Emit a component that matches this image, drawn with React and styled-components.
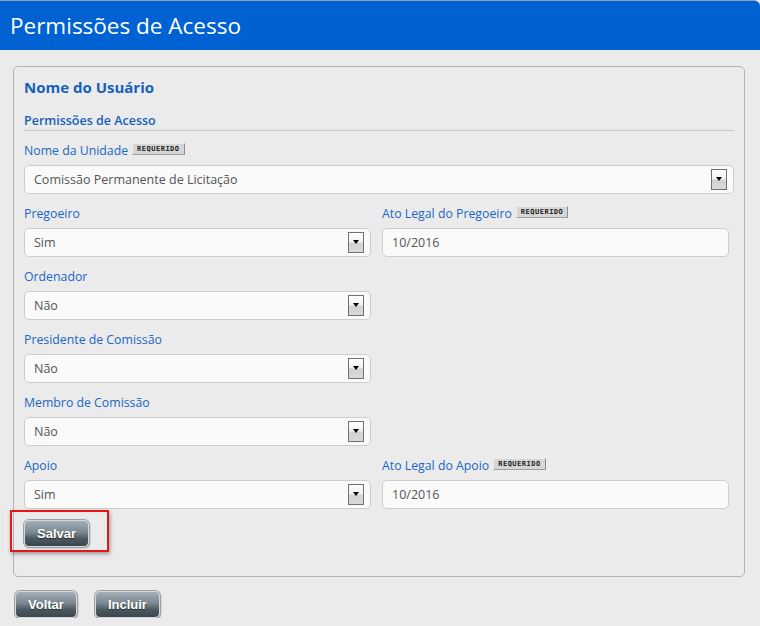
import * as React from 'react';
import styled, { createGlobalStyle } from 'styled-components';

const GlobalStyle = createGlobalStyle`
  body {
    margin: 0;
    background: #ebebeb;
    font-family: "Open Sans", "DejaVu Sans", sans-serif;
  }
`;

const fields = [
  { label: 'Pregoeiro', value: 'Sim', legal: { label: 'Ato Legal do Pregoeiro', value: '10/2016' } },
  { label: 'Ordenador', value: 'Não' },
  { label: 'Presidente de Comissão', value: 'Não' },
  { label: 'Membro de Comissão', value: 'Não' },
  { label: 'Apoio', value: 'Sim', legal: { label: 'Ato Legal do Apoio', value: '10/2016' } },
];

export default function App() {
  return (
    <>
      <GlobalStyle />
      <Header>Permissões de Acesso</Header>
      <Content>
        <Panel>
          <Title>Nome do Usuário</Title>
          <SubTitle>Permissões de Acesso</SubTitle>
          <Form>
            <Field wide>
              <Label>Nome da Unidade <Required>REQUERIDO</Required></Label>
              <Select value="Comissão Permanente de Licitação" />
            </Field>
            {fields.map(f => (
              <React.Fragment key={f.label}>
                <Field>
                  <Label>{f.label}</Label>
                  <Select value={f.value} />
                </Field>
                {f.legal ? (
                  <Field>
                    <Label>{f.legal.label} <Required>REQUERIDO</Required></Label>
                    <Input>{f.legal.value}</Input>
                  </Field>
                ) : <div />}
              </React.Fragment>
            ))}
          </Form>
          <Highlight>
            <Button>Salvar</Button>
          </Highlight>
        </Panel>
        <Actions>
          <Button>Voltar</Button>
          <Button>Incluir</Button>
        </Actions>
      </Content>
    </>
  );
}

function Select({ value }) {
  return (
    <SelectBox>
      <span>{value}</span>
      <Arrow />
    </SelectBox>
  );
}

const Header = styled.div`
  height: 49px;
  border-top: 1px solid #8c9fb8;
  border-top-right-radius: 6px;
  background: #0062d2;
  color: #fff;
  font-size: 22.5px;
  line-height: 50px;
  padding-left: 10px;
`;

const Content = styled.div`
  padding: 16px 15px 0 13px;
`;

const Panel = styled.div`
  border: 1px solid #b4b4b4;
  border-radius: 5px;
  padding: 10px 10px 29px 10px;
`;

const Title = styled.div`
  color: #1560b8;
  font-size: 15px;
  font-weight: 700;
  line-height: 20px;
`;

const SubTitle = styled.div`
  margin-top: 16px;
  color: #1560b8;
  font-size: 12.5px;
  font-weight: 600;
  line-height: 16px;
  border-bottom: 1px solid #c8c8c8;
  padding-bottom: 1px;
`;

const Form = styled.div`
  margin-top: 11px;
  display: grid;
  grid-template-columns: 347px 347px;
  column-gap: 11px;
  row-gap: 11px;
`;

const Field = styled.div`
  grid-column: ${p => (p.wide ? '1 / -1' : 'auto')};
  margin-right: ${p => (p.wide ? '-5px' : '0')};
  display: flex;
  flex-direction: column;
  gap: 5px;
`;

const Label = styled.div`
  color: #1a67c6;
  font-size: 12.3px;
  line-height: 18px;
  display: flex;
  align-items: center;
  gap: 4px;
`;

const Required = styled.span`
  display: inline-block;
  height: 10px;
  padding: 0 4px;
  background: #d6d6d6;
  border-top: 1px solid #ececec;
  border-left: 1px solid #ececec;
  border-right: 1px solid #8d8d8d;
  border-bottom: 1px solid #a0a0a0;
  color: #222;
  font-family: "DejaVu Sans Mono", monospace;
  font-size: 7px;
  font-weight: 700;
  line-height: 10px;
  letter-spacing: 0.5px;
  margin-top: -4px;
`;

const SelectBox = styled.div`
  height: 27px;
  border: 1px solid #cdcdcd;
  border-radius: 5px;
  background: #fafafa;
  display: flex;
  align-items: center;
  justify-content: space-between;
  padding: 0 6px 0 9px;
  color: #555;
  font-size: 12.5px;
`;

const Arrow = styled.span`
  position: relative;
  width: 14px;
  height: 19px;
  border: 1.5px solid #707070;
  background: linear-gradient(#ffffff 0%, #f2f2f2 45%, #d2d2d2 55%, #d9d9d9 100%);
  &::after {
    content: '';
    position: absolute;
    left: 3.5px;
    top: 7px;
    border-left: 3.5px solid transparent;
    border-right: 3.5px solid transparent;
    border-top: 4px solid #000;
  }
`;

const Input = styled.div`
  height: 27px;
  border: 1px solid #cdcdcd;
  border-radius: 5px;
  background: #fafafa;
  display: flex;
  align-items: center;
  padding-left: 9px;
  color: #555;
  font-size: 12.5px;
`;

const Highlight = styled.div`
  position: relative;
  display: inline-block;
  margin-top: 11px;
  &::after {
    content: '';
    position: absolute;
    left: -14px;
    top: -10px;
    right: -20px;
    bottom: -5px;
    border: 2px solid #e8141b;
    box-shadow: 1px 2px 4px rgba(0, 0, 0, 0.35);
    pointer-events: none;
  }
`;

const Button = styled.button`
  height: 27px;
  padding: 0 12px;
  border: 1px solid #d4d8db;
  border-radius: 5px;
  box-shadow: 0 0 0 1px #9aa0a4, 1px 1px 2px rgba(0, 0, 0, 0.3);
  background: linear-gradient(#a3afb8 0%, #7b8891 45%, #4d5960 70%, #3b464d 100%);
  color: #fff;
  font-family: "Liberation Sans", Arial, sans-serif;
  font-size: 13px;
  font-weight: 700;
  text-shadow: 0 1px 1px rgba(0, 0, 0, 0.5);
  cursor: pointer;
`;

const Actions = styled.div`
  display: flex;
  gap: 18px;
  margin-top: 14px;
  padding-left: 2px;
`;
